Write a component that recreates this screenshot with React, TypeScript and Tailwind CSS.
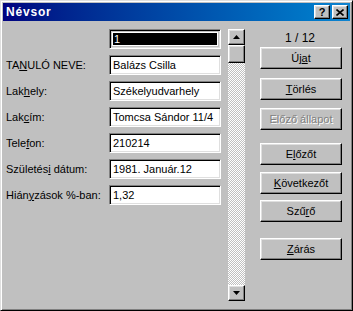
import React from "react";

const raised =
  "border border-t-white border-l-white border-r-black border-b-black shadow-[inset_-1px_-1px_#808080,inset_1px_1px_#dfdfdf]";
const sunken =
  "border border-t-[#808080] border-l-[#808080] border-r-white border-b-white shadow-[inset_1px_1px_#000,inset_-1px_-1px_#dfdfdf]";

function Key({ text, at }: { text: string; at: number }) {
  return (
    <>
      {text.slice(0, at)}
      <span className="underline underline-offset-[1px]">{text[at]}</span>
      {text.slice(at + 1)}
    </>
  );
}

const fields: { label: React.ReactNode; value: string }[] = [
  { label: <Key text="TANULÓ NEVE:" at={2} />, value: "Balázs Csilla" },
  { label: <Key text="Lakhely:" at={3} />, value: "Székelyudvarhely" },
  { label: <Key text="Lakcím:" at={3} />, value: "Tomcsa Sándor 11/4" },
  { label: <Key text="Telefon:" at={4} />, value: "210214" },
  { label: <Key text="Születési dátum:" at={8} />, value: "1981. Január.12" },
  { label: <Key text="Hiányzások %-ban:" at={4} />, value: "1,32" },
];

function Btn({
  children,
  className = "",
  disabled = false,
}: {
  children: React.ReactNode;
  className?: string;
  disabled?: boolean;
}) {
  return (
    <div
      className={`${raised} h-[22px] w-[82px] bg-[#c0c0c0] flex items-center justify-center ${
        disabled ? "text-[#808080] [text-shadow:1px_1px_0_#fff]" : "text-black"
      } ${className}`}
    >
      {children}
    </div>
  );
}

function Arrow({ down = false }: { down?: boolean }) {
  return (
    <svg width="7" height="4" viewBox="0 0 7 4" className={down ? "rotate-180" : ""}>
      <path d="M3.5 0 L7 4 L0 4 Z" fill="#000" />
    </svg>
  );
}

export default function App() {
  return (
    <div className="w-[353px] h-[311px] bg-[#c0c0c0] border border-t-[#dfdfdf] border-l-[#dfdfdf] border-r-black border-b-black shadow-[inset_1px_1px_#fff,inset_-1px_-1px_#808080] p-[2px] flex flex-col font-['Liberation_Sans',Arial,sans-serif] text-[11px] text-black select-none">
      {/* title bar */}
      <div className="h-[18px] bg-gradient-to-r from-[#000080] to-[#1084d0] flex items-center justify-between pl-[3px] pr-[2px]">
        <span className="text-white font-bold text-[12px] tracking-[0.8px]">Névsor</span>
        <div className="flex">
          <div className={`${raised} w-[16px] h-[14px] bg-[#c0c0c0] flex items-center justify-center font-bold text-[11px] leading-none`}>
            ?
          </div>
          <div className={`${raised} w-[16px] h-[14px] bg-[#c0c0c0] flex items-center justify-center ml-[2px]`}>
            <svg width="8" height="7" viewBox="0 0 8 7">
              <path d="M0.5 0.5 L7.5 6.5 M7.5 0.5 L0.5 6.5" stroke="#000" strokeWidth="1.6" />
            </svg>
          </div>
        </div>
      </div>

      {/* client area */}
      <div className="flex flex-1">
        <div className="pt-[8px] pl-[3px] flex flex-col gap-[6px]">
          <div className="flex items-center h-[20px]">
            <div className="w-[103px]" />
            <div className={`${sunken} w-[112px] h-[20px] p-[2px]`}>
              <div className="w-full h-full bg-black border border-white text-white flex items-center pl-[1px]">1</div>
            </div>
          </div>
          {fields.map((f, i) => (
            <div key={i} className="flex items-center h-[20px]">
              <div className="w-[103px] whitespace-nowrap">{f.label}</div>
              <div className={`${sunken} w-[112px] h-[20px] bg-white flex items-center px-[3px] whitespace-nowrap overflow-hidden`}>
                {f.value}
              </div>
            </div>
          ))}
        </div>

        {/* scrollbar */}
        <div className="ml-[7px] mt-[8px] w-[17px] h-[272px] flex flex-col bg-[repeating-conic-gradient(#fff_0_25%,#c0c0c0_0_50%)] bg-[length:2px_2px]">
          <div className={`${raised} h-[16px] bg-[#c0c0c0] flex items-center justify-center`}>
            <Arrow />
          </div>
          <div className={`${raised} h-[18px] bg-[#c0c0c0]`} />
          <div className="flex-1" />
          <div className={`${raised} h-[16px] bg-[#c0c0c0] flex items-center justify-center`}>
            <Arrow down />
          </div>
        </div>

        {/* buttons */}
        <div className="ml-[15px] pt-[8px] flex flex-col">
          <div className="h-[18px] flex items-center pl-[25px] text-[12px]">1 / 12</div>
          <Btn>
            <Key text="Újat" at={2} />
          </Btn>
          <Btn className="mt-[9px]">
            <Key text="Törlés" at={0} />
          </Btn>
          <Btn className="mt-[8px]" disabled>
            Előző állapot
          </Btn>
          <Btn className="mt-[13px]">
            <Key text="Előzőt" at={1} />
          </Btn>
          <Btn className="mt-[7px]">
            <Key text="Következőt" at={0} />
          </Btn>
          <Btn className="mt-[6px]">
            <Key text="Szűrő" at={3} />
          </Btn>
          <Btn className="mt-[16px]">
            <Key text="Zárás" at={0} />
          </Btn>
        </div>
      </div>
    </div>
  );
}
